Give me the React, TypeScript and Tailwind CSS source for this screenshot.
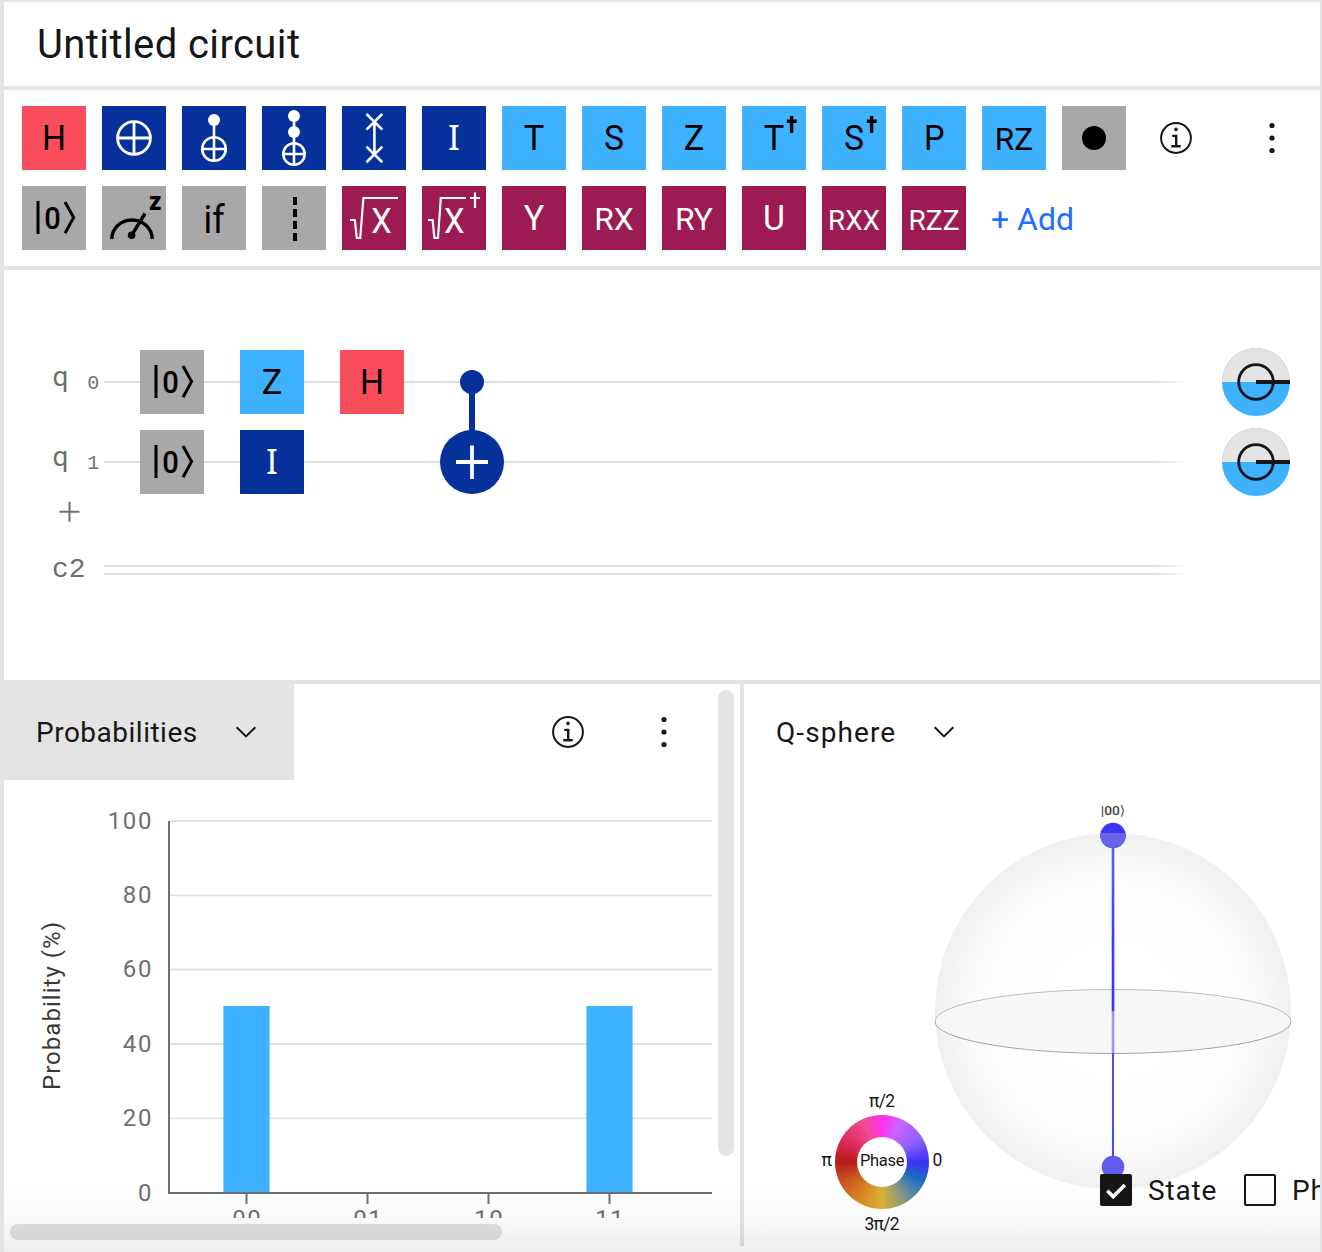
import type { ReactNode } from "react";

type Kind =
  | "H" | "X" | "CX" | "CCX" | "SWAP" | "I" | "T" | "S" | "Z" | "Tdg" | "Sdg" | "P" | "RZ" | "CTRL"
  | "RESET" | "MEASURE" | "IF" | "BARRIER" | "SX" | "SXdg" | "Y" | "RX" | "RY" | "U" | "RXX" | "RZZ";

const RED = "#fa4d5c";
const NAVY = "#06309a";
const SKY = "#3eb1ff";
const GRAY = "#a8a8a8";
const PLUM = "#9c1b52";

const BLACK = "#000000";
const WHITE = "#ffffff";

function Glyph({ children, x = 32, y = 44, w, size = 35, fill = BLACK, font = "Roboto, sans-serif", weight = 400 }: {
  children: string; x?: number; y?: number; w?: number; size?: number; fill?: string; font?: string; weight?: number;
}) {
  return (
    <text x={x} y={y} fill={fill} fontSize={size} fontFamily={font} fontWeight={weight} textAnchor="middle"
      textLength={w} lengthAdjust="spacingAndGlyphs">
      {children}
    </text>
  );
}

const Target = ({ cy, r, sw }: { cy: number; r: number; sw: number }) => (
  <g fill="none" stroke={WHITE} strokeWidth={sw}>
    <circle cx="32" cy={cy} r={r} />
    <path d={`M32 ${cy - r}V${cy + r}M${32 - r} ${cy}H${32 + r}`} />
  </g>
);

const Dagger = () => (
  <path d="M44.8 15.2H54.8M49.6 10V27" fill="none" stroke={BLACK} strokeWidth="3.4" />
);

const gates: Record<Kind, { bg: string; art: ReactNode }> = {
  H: { bg: RED, art: <Glyph w={24}>H</Glyph> },
  X: { bg: NAVY, art: <Target cy={32} r={16.4} sw={2.8} /> },
  CX: {
    bg: NAVY,
    art: (
      <>
        <path d="M32 14V32" stroke={WHITE} strokeWidth="2.6" />
        <circle cx="32" cy="14" r="6" fill={WHITE} />
        <Target cy={43} r={11.8} sw={2.6} />
      </>
    ),
  },
  CCX: {
    bg: NAVY,
    art: (
      <>
        <path d="M32 10V38" stroke={WHITE} strokeWidth="2.6" />
        <circle cx="32" cy="10" r="6" fill={WHITE} />
        <circle cx="32" cy="26" r="6" fill={WHITE} />
        <Target cy={48} r={10.7} sw={2.6} />
      </>
    ),
  },
  SWAP: {
    bg: NAVY,
    art: (
      <path d="M24.5 8L40.3 23.6M40.3 8L24.5 23.6M24.5 40.6L40.3 56.2M40.3 40.6L24.5 56.2M32.4 16V48"
        stroke={WHITE} strokeWidth="2.6" fill="none" />
    ),
  },
  I: { bg: NAVY, art: <Glyph fill={WHITE} font="'Noto Sans', sans-serif">I</Glyph> },
  T: { bg: SKY, art: <Glyph w={20.5}>T</Glyph> },
  S: { bg: SKY, art: <Glyph w={20}>S</Glyph> },
  Z: { bg: SKY, art: <Glyph w={20.5}>Z</Glyph> },
  Tdg: { bg: SKY, art: <><Glyph w={20.5}>T</Glyph><Dagger /></> },
  Sdg: { bg: SKY, art: <><Glyph w={20}>S</Glyph><Dagger /></> },
  P: { bg: SKY, art: <Glyph x={32.3} w={20.5}>P</Glyph> },
  RZ: { bg: SKY, art: <Glyph size={31} w={38.5}>RZ</Glyph> },
  CTRL: { bg: GRAY, art: <circle cx="32" cy="32" r="12" fill={BLACK} /> },
  RESET: {
    bg: GRAY,
    art: (
      <>
        <path d="M16 15V48M43 16L51.6 31.6L43 47.2" fill="none" stroke={BLACK} strokeWidth="3" />
        <Glyph x={30.6} y={42.7} size={32} w={16.5} weight={500}>0</Glyph>
      </>
    ),
  },
  MEASURE: {
    bg: GRAY,
    art: (
      <>
        <path d="M9.8 53A20.2 19 0 0 1 50.2 53M29.6 49.3L43 27.5" fill="none" stroke={BLACK} strokeWidth="3.4" />
        <circle cx="29.6" cy="49.3" r="3.8" fill={BLACK} />
        <Glyph x={53.3} y={24} size={26} weight={900} w={12.5}>z</Glyph>
      </>
    ),
  },
  IF: { bg: GRAY, art: <Glyph y={47} size={38} w={21}>if</Glyph> },
  BARRIER: { bg: GRAY, art: <path d="M33 11V55" stroke={BLACK} strokeWidth="4" strokeDasharray="8 4" /> },
  SX: {
    bg: PLUM,
    art: (
      <>
        <path d="M8 34H12.8L14.8 52H18.2L21.4 12H56" fill="none" stroke={WHITE} strokeWidth="2.2" />
        <Glyph x={39.4} y={47} fill={WHITE} w={20.5}>X</Glyph>
      </>
    ),
  },
  SXdg: {
    bg: PLUM,
    art: (
      <>
        <path d="M6 34H10.6L12.4 52H16L18.8 12H43.8M48 12H58M53 6.4V22" fill="none" stroke={WHITE} strokeWidth="2.2" />
        <Glyph x={32.2} y={47} fill={WHITE} w={20.5}>X</Glyph>
      </>
    ),
  },
  Y: { bg: PLUM, art: <Glyph fill={WHITE} w={20.5}>Y</Glyph> },
  RX: { bg: PLUM, art: <Glyph fill={WHITE} size={31} w={39.5}>RX</Glyph> },
  RY: { bg: PLUM, art: <Glyph fill={WHITE} size={31} w={38}>RY</Glyph> },
  U: { bg: PLUM, art: <Glyph fill={WHITE} w={22}>U</Glyph> },
  RXX: { bg: PLUM, art: <Glyph fill={WHITE} size={28} w={52}>RXX</Glyph> },
  RZZ: { bg: PLUM, art: <Glyph fill={WHITE} size={28} w={51}>RZZ</Glyph> },
};

function Gate({ kind, x, y }: { kind: Kind; x?: number; y?: number }) {
  const g = gates[kind];
  return (
    <svg x={x} y={y} width="64" height="64" viewBox="0 0 64 64" className="block shrink-0">
      <rect width="64" height="64" fill={g.bg} />
      {g.art}
    </svg>
  );
}

const InfoIcon = () => (
  <svg width="32" height="32" viewBox="0 0 32 32" className="block shrink-0">
    <circle cx="16" cy="16" r="14.9" fill="none" stroke="#161616" strokeWidth="2" />
    <circle cx="16" cy="7.4" r="1.8" fill="#161616" />
    <path d="M12.2 13.9H16.2V24.2M11.3 24.2H20.7" fill="none" stroke="#161616" strokeWidth="2.4" />
  </svg>
);

const KebabIcon = () => (
  <svg width="8" height="32" viewBox="0 0 8 32" className="block shrink-0">
    {[3.5, 16, 28.5].map((y) => <circle key={y} cx="4" cy={y} r="2.6" fill="#161616" />)}
  </svg>
);

const ChevronIcon = () => (
  <svg width="20" height="12" viewBox="0 0 20 12" className="block shrink-0">
    <path d="M0.7 1.2L10 10.4L19.3 1.2" fill="none" stroke="#161616" strokeWidth="2" />
  </svg>
);

const rowOne: Kind[] = ["H", "X", "CX", "CCX", "SWAP", "I", "T", "S", "Z", "Tdg", "Sdg", "P", "RZ", "CTRL"];
const rowTwo: Kind[] = ["RESET", "MEASURE", "IF", "BARRIER", "SX", "SXdg", "Y", "RX", "RY", "U", "RXX", "RZZ"];

function Disc({ y }: { y: number }) {
  return (
    <g>
      <circle cx="1256" cy={y} r="34" fill={SKY} />
      <path d={`M1222 ${y}A34 34 0 0 1 1290 ${y}Z`} fill="#e4e4e4" />
      <circle cx="1256" cy={y} r="17.3" fill="none" stroke="#161616" strokeWidth="2.8" />
      <path d={`M1256 ${y}H1290`} stroke="#161616" strokeWidth="4" />
    </g>
  );
}

function Circuit() {
  return (
    <svg viewBox="4 270 1316 410" width="1316" height="410" className="block">
      <defs>
        <linearGradient id="wire" gradientUnits="userSpaceOnUse" x1="104" x2="1190" y1="0" y2="0">
          <stop offset="0" stopColor="#dedede" />
          <stop offset="0.965" stopColor="#dedede" />
          <stop offset="1" stopColor="#dedede" stopOpacity="0" />
        </linearGradient>
      </defs>
      {[381, 461, 565, 573].map((y) => <rect key={y} x="104" y={y} width="1086" height="2" fill="url(#wire)" />)}
      {[0, 1].map((n) => (
        <g key={n} fill="#6f6f6f" fontWeight="400">
          <text x="60.5" y={386 + n * 80} fontSize="28" fontFamily="Roboto, sans-serif" textAnchor="middle">q</text>
          <text x="93.3" y={389 + n * 80} fontSize="20" fontFamily="'Liberation Mono', monospace" textAnchor="middle">{n}</text>
        </g>
      ))}
      <path d="M59.5 511.7H79.5M69.5 501.7V521.7" stroke="#6f6f6f" strokeWidth="2" />
      <text x="52" y="577" fontSize="28" fontWeight="400" fontFamily="'Liberation Mono', monospace" fill="#6f6f6f">c2</text>
      <Gate kind="RESET" x={140} y={350} />
      <Gate kind="RESET" x={140} y={430} />
      <Gate kind="Z" x={240} y={350} />
      <Gate kind="I" x={240} y={430} />
      <Gate kind="H" x={340} y={350} />
      <path d="M472 382V440" stroke={NAVY} strokeWidth="6" />
      <circle cx="472" cy="382" r="12" fill={NAVY} />
      <circle cx="472" cy="462" r="32" fill={NAVY} />
      <path d="M456 462H488M472 445.5V479" stroke={WHITE} strokeWidth="3.8" />
      <Disc y={382} />
      <Disc y={462} />
    </svg>
  );
}

const ticks = [
  { v: "100", y: 821 }, { v: "80", y: 895.3 }, { v: "60", y: 969.5 },
  { v: "40", y: 1044 }, { v: "20", y: 1118.3 }, { v: "0", y: 1193 },
];
const states = [
  { s: "00", x: 246.5, p: 50 }, { s: "01", x: 367.5, p: 0 }, { s: "10", x: 488.5, p: 0 }, { s: "11", x: 609.5, p: 50 },
];

function Histogram() {
  return (
    <svg viewBox="4 780 708 438" width="708" height="438" className="block" fontFamily="Roboto, sans-serif" fontSize="24">
      {ticks.map((t) => (
        <g key={t.v}>
          <path d={`M170 ${t.y}H712`} stroke="#e2e2e2" strokeWidth="1.8" />
          <text x="153" y={t.y + 7.8} letterSpacing="1.6" textAnchor="end" fill="#6f6f6f">{t.v}</text>
        </g>
      ))}
      {states.map((d) => (
        <g key={d.s}>
          <rect x={d.x - 23.1} y={1192 - d.p * 3.72} width="46.2" height={d.p * 3.72} fill={SKY} />
          <path d={`M${d.x} 1193V1204`} stroke="#6f6f6f" strokeWidth="2" />
          <text x={d.x + 0.8} y="1227.3" letterSpacing="1.6" textAnchor="middle" fill="#6f6f6f">{d.s}</text>
        </g>
      ))}
      <path d="M169 821V1193H712" fill="none" stroke="#6f6f6f" strokeWidth="2" />
      <text transform="translate(60 1090) rotate(-90)" textLength="168" fill="#393939">Probability (%)</text>
    </svg>
  );
}

function Sphere() {
  return (
    <svg viewBox="744 780 576 472" width="576" height="472" className="block">
      <defs>
        <radialGradient id="ball" cx="0.5" cy="0.5" r="0.5">
          <stop offset="0" stopColor="#fff" />
          <stop offset="0.66" stopColor="#fefefe" />
          <stop offset="0.84" stopColor="#f9f9f9" />
          <stop offset="1" stopColor="#f0f0f0" />
        </radialGradient>
        <linearGradient id="axis" gradientUnits="userSpaceOnUse" x1="0" x2="0" y1="849" y2="1011">
          <stop offset="0" stopColor="#625ced" />
          <stop offset="0.5" stopColor="#443ef2" />
          <stop offset="1" stopColor="#3b35f4" />
        </linearGradient>
      </defs>
      <circle cx="1113" cy="1011" r="178" fill="url(#ball)" />
      <ellipse cx="1113" cy="1021.5" rx="178" ry="32" fill="#f7f7f7" fillOpacity="0.9" />
      <path d="M935 1021.5A178 32 0 0 1 1291 1021.5" fill="none" stroke="#bdbdbd" strokeWidth="1" />
      <path d="M935 1021.5A178 32 0 0 0 1291 1021.5" fill="none" stroke="#a4a4a4" strokeWidth="1" />
      <rect x="1111.7" y="845" width="2.6" height="166" fill="url(#axis)" />
      <rect x="1111.7" y="1011" width="2.6" height="42" fill="#9a96f2" />
      <rect x="1112" y="1053" width="2" height="108" fill="#5049ee" />
      <circle cx="1113" cy="835.5" r="12.7" fill="#3c35f3" />
      <path d="M1100.5 833H1125.5A12.7 12.7 0 1 1 1100.5 833Z" fill="#6a63ea" />
      <circle cx="1113" cy="1167" r="11.3" fill="#625cee" />
      <text x="1113" y="815" fontSize="13" fontFamily="Roboto, 'DejaVu Sans', sans-serif" fontWeight="500" textAnchor="middle"
        textLength="24.5" lengthAdjust="spacingAndGlyphs" fill="#444">|00⟩</text>
      <g fontFamily="Roboto, sans-serif" fontSize="17.5" fontWeight="400" fill="#161616" textAnchor="middle">
        <text x="882" y="1107" textLength="26">π/2</text>
        <text x="882" y="1230" textLength="35">3π/2</text>
        <text x="826.7" y="1166">π</text>
        <text x="937.3" y="1166">0</text>
      </g>
    </svg>
  );
}

export default function App() {
  return (
    <div className="relative flex h-[1252px] w-[1322px] flex-col gap-1 overflow-hidden border-t-2 border-r-2 border-l-4 border-[#e4e4e4] bg-[#e4e4e4] font-[Roboto,sans-serif] text-[#161616]">
      <header className="flex h-[84px] shrink-0 items-center bg-white pt-px pl-[33px]">
        <h1 className="text-[40px] tracking-[0.4px]">Untitled circuit</h1>
      </header>

      <section className="flex h-44 shrink-0 flex-col gap-4 bg-white pt-4 pl-[18px]">
        <div className="flex items-center gap-4">
          {rowOne.map((k) => <Gate key={k} kind={k} />)}
          <div className="ml-[18px] flex items-center gap-[76px]">
            <InfoIcon />
            <KebabIcon />
          </div>
        </div>
        <div className="flex items-center gap-4">
          {rowTwo.map((k) => <Gate key={k} kind={k} />)}
          <button className="ml-[9px] pt-0.5 text-[32px] text-[#1f70ff]">+ Add</button>
        </div>
      </section>

      <section className="h-[410px] shrink-0 bg-white">
        <Circuit />
      </section>

      <div className="flex min-h-0 grow bg-white">
        <section className="relative flex w-[736px] shrink-0 flex-col bg-white">
          <div className="flex h-24 shrink-0">
            <button className="flex w-[290px] items-center justify-between bg-[#e4e4e4] pr-[38px] pl-8">
              <span className="pt-0.5 text-[28px] tracking-[0.5px]">Probabilities</span>
              <ChevronIcon />
            </button>
            <div className="ml-[258px] flex items-center gap-[76px]">
              <InfoIcon />
              <KebabIcon />
            </div>
          </div>
          <Histogram />
          <div className="absolute top-1.5 right-1.5 h-[466px] w-4 rounded-full bg-[#e4e4e4]" />
          <div className="absolute bottom-3 left-1.5 h-4 w-[492px] rounded-full bg-[#e0e0e0]" />
        </section>
        <div className="h-[562px] w-1 shrink-0 bg-[#e4e4e4]" />
        <section className="relative flex min-w-0 grow flex-col overflow-hidden bg-white">
          <div className="flex h-24 shrink-0 items-center pl-8">
            <span className="w-[158px] pt-0.5 text-[28px] tracking-[1.1px]">Q-sphere</span>
            <ChevronIcon />
          </div>
          <Sphere />
          <div className="absolute top-[431px] left-[91px] flex h-[94px] w-[94px] items-center justify-center rounded-full bg-[conic-gradient(#ff30ee_0deg,#cc64ff_24deg,#8f60ff_58deg,#3c32f4_90deg,#1c6cc4_115deg,#7a9590_145deg,#dcb134_180deg,#d68322_215deg,#cb5a1e_240deg,#b71c18_270deg,#dc2c60_302deg,#f24a92_335deg,#ff30ee_360deg)]">
            <div className="flex h-[50px] w-[50px] items-center justify-center rounded-full bg-white pb-px">
              <span className="text-[16.5px] leading-none tracking-[-0.3px]">Phase</span>
            </div>
          </div>
          <div className="absolute top-[490px] left-[356px] flex items-center text-[28px] leading-8 tracking-[0.8px] whitespace-nowrap">
            <svg width="32" height="32" viewBox="0 0 32 32" className="block shrink-0">
              <rect width="32" height="32" rx="2" fill="#161616" />
              <path d="M7.3 16.8L13.2 22.6L24.8 11" fill="none" stroke="#fff" strokeWidth="3.6" />
            </svg>
            <span className="relative top-px ml-4 w-24">State</span>
            <span className="block size-8 shrink-0 rounded-xs border-2 border-[#161616] bg-white" />
            <span className="relative top-px ml-4">Phase</span>
          </div>
        </section>
      </div>
      <div className="pointer-events-none absolute inset-x-0 bottom-0 h-[70px] bg-linear-to-b from-transparent via-black/2 to-black/7" />
    </div>
  );
}
